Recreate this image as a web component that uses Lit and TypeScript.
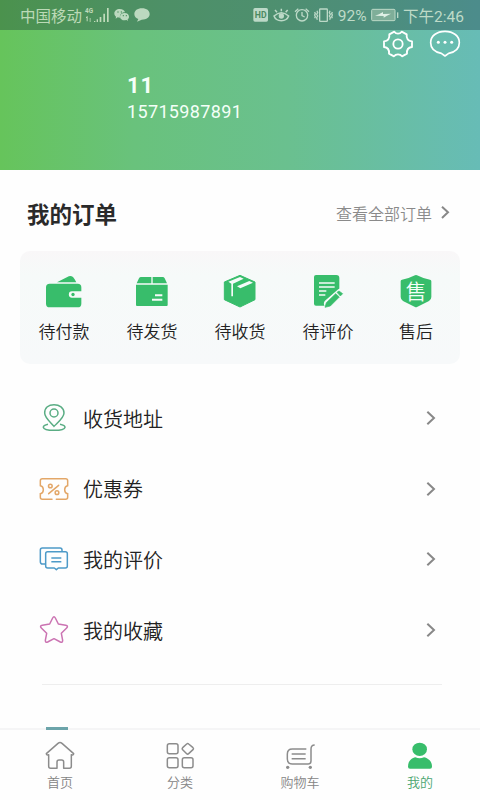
import { LitElement, html, css, svg, nothing } from "lit";
import { customElement, property } from "lit/decorators.js";

// Every icon is drawn on a grid of three units per CSS pixel.
const icons: Record<string, { w: number; h: number; body: unknown }> = {
  wallet: { w: 40, h: 40, body: svg`<g fill="#38bd6b"><path d="M39 34 70 18Q79 12 87 18Q91 22 97 34Z"/><path fill-rule="evenodd" d="M17 38H101Q112 38 112 49V61H84A9.500 9.500 0 0 0 84 80H112V98Q112 109 101 109H17Q6 109 6 98V49Q6 38 17 38Z"/><circle cx="87" cy="70.500" r="5"/></g>` },
  box: { w: 40, h: 40, body: svg`<path fill="#38bd6b" d="M14 37 21 22Q23 18 27 18H58V37ZM62 18H92Q96 18 98 22L105 37H62ZM12 41H107V102Q107 105 104 105H15Q12 105 12 102Z"/><path stroke="#f6faf9" stroke-width="6" d="M69 73H91M60 86H91"/>` },
  cube: { w: 40, h: 40, body: svg`<path fill="#38bd6b" stroke="#38bd6b" stroke-width="3" stroke-linejoin="round" d="M60 13 105 33V86L60 108 13 86V33Z"/><path fill="#f6faf9" d="M25 32 60 18 71 23 39 38V76H34V38ZM51 46 88 30 99 35 61 52Z"/>` },
  review: { w: 40, h: 40, body: svg`<path fill="#38bd6b" d="M24 12H85Q94 12 94 21V60L53 104H24Q18 104 18 98V18Q18 12 24 12Z"/><path stroke="#f6faf9" stroke-width="4.500" d="M33 36H80M33 48H80M33 60H55M33 72H52"/><path stroke="#f6faf9" stroke-width="25" stroke-linecap="round" d="M60 98 98 65"/><path fill="#38bd6b" stroke="#38bd6b" stroke-width="2" stroke-linejoin="round" d="M51 109 55 95 83 68 94 78 67 105ZM87 64 93 60 104 68 97 75Z"/>` },
  service: { w: 40, h: 40, body: svg`<path fill="#38bd6b" d="M57 13Q60 11 63 13Q82 23 102 26Q106 27 106 31V78Q106 86 99 90L63 108Q60 110 57 108L21 90Q14 86 14 78V31Q14 27 18 26Q38 23 57 13Z"/><text x="60" y="84" text-anchor="middle" font-size="63" font-weight="350" fill="#f4fff8" font-family="Noto Sans CJK SC, sans-serif">售</text>` },
  pin: { w: 30, h: 30, body: svg`<g fill="none" stroke="#5aad84" stroke-width="4.500"><path d="M45 70C33 56 17 44 17 30C17 14 29 5 45 5S75 14 75 30C75 44 58 57 45 70Z"/><circle cx="45" cy="30" r="12"/><path d="M27 64C17 66 13 69 13 73C15 85 76 85 78 73C78 69 73 66 63 64"/></g>` },
  coupon: { w: 30, h: 30, body: svg`<g fill="none" stroke="#e3a768" stroke-width="4.500" stroke-linecap="round"><path d="M39 76H10Q4 76 4 70V59C16 57 16 37 4 35V20Q4 14 10 14H80Q86 14 86 20V35C74 37 74 57 86 59V70Q86 76 80 76H52M29 59 59 34"/><circle cx="34" cy="36" r="5.500"/><circle cx="54" cy="56" r="5.500"/></g>` },
  chat: { w: 30, h: 30, body: svg`<g fill="none" stroke="#4d9ac8" stroke-width="4.500" stroke-linejoin="round"><path d="M20 60H11Q4 60 4 53V18Q4 12 10 12H63Q69 12 69 18V23"/><path d="M26 23H79Q85 23 85 29V66Q85 72 79 72H58L52 77 46 72H26Q20 72 20 66V29Q20 23 26 23Z"/><path d="M37 42H67M37 53H67"/></g>` },
  star: { w: 30, h: 30, body: svg`<path fill="none" stroke="#cb73b2" stroke-width="4.500" stroke-linejoin="round" d="M41 9Q45 2 49 9L58 27 80 31Q89 33 83 39L67 55 71 76Q71 84 64 81L45 71 26 81Q19 84 19 76L23 55 7 39Q1 33 10 31L32 27Z"/>` },
  home: { w: 32, h: 30, body: svg`<path fill="none" stroke="#8c8c8c" stroke-width="4.500" stroke-linejoin="round" d="M7 38 42 7Q48 2 54 7L89 38Q88 44 82 41V76Q82 82 76 82H59V63Q59 57 53 57H45Q39 57 39 63V82H20Q14 82 14 76V41Q8 44 7 38Z"/>` },
  category: { w: 32, h: 30, body: svg`<g fill="none" stroke="#8c8c8c" stroke-width="4.500"><rect x="10" y="8" width="32" height="30" rx="6"/><rect x="10" y="50" width="32" height="30" rx="6"/><rect x="55" y="50" width="32" height="30" rx="6"/><path stroke-linejoin="round" d="M68 9Q71 6 74 9L87 20Q90 23 87 26L74 38Q71 41 68 38L56 26Q53 23 56 20Z"/></g>` },
  cart: { w: 32, h: 30, body: svg`<g fill="none" stroke="#8c8c8c" stroke-width="4.500"><path d="M67 24H25Q10 24 10 39V54Q10 69 25 69H72Q81 69 81 60V24Q81 12 92 12M23 39H65M23 53H65"/></g><g fill="#8c8c8c"><circle cx="11" cy="79" r="5"/><circle cx="79" cy="79" r="5"/></g>` },
  user: { w: 32, h: 30, body: svg`<g fill="#38bd6b"><ellipse cx="47" cy="25" rx="22" ry="20"/><path d="M12 77C12 59 24 51 34 49Q47 55 60 49C72 52 84 60 84 77Q84 83 78 83H18Q12 83 12 77Z"/></g>` },
  gear: { w: 32, h: 30, body: svg`<g fill="none" stroke="#fff" stroke-width="5.500" stroke-linejoin="round"><path d="M37 8Q41 14 48 14T59 8L74 16Q72 35 90 37V54Q73 56 75 74L60 82Q56 76 48 76T36 82L21 74Q23 56 6 54V37Q24 35 22 16Z"/><circle cx="48" cy="45" r="14"/></g>` },
  bubble: { w: 32, h: 30, body: svg`<path fill="none" stroke="#fff" stroke-width="5" stroke-linejoin="round" d="M48 81 37 73C18 69 5 58 5 41C5 21 23 7 48 7S91 21 91 41C91 58 78 69 59 73Z"/><g fill="#fff"><circle cx="28" cy="40" r="4.500"/><circle cx="48" cy="40" r="4.500"/><circle cx="68" cy="40" r="4.500"/></g>` },
  chevron: { w: 12, h: 18, body: svg`<path fill="none" stroke="#888" stroke-width="6" d="M7 8 27 27 7 46"/>` },
  chevronSmall: { w: 10, h: 14, body: svg`<path fill="none" stroke="#888" stroke-width="6" d="M6 2 24 19 6 36"/>` },
  signal: { w: 25, h: 16, body: svg`<g fill="#c0dbbb"><path d="M27 42H31V45H27ZM35 37H39V45H35ZM44 30H49V45H44ZM55 20H60V45H55ZM66 3H71V45H66Z"/><path d="M3 30 8 27V43H5V33H3ZM14 34H17V38H14ZM14 40H17V44H14Z"/></g><text x="0" y="19" font-size="22" font-weight="700" textLength="24" lengthAdjust="spacingAndGlyphs" fill="#c0dbbb" font-family="Roboto, sans-serif">4G</text>` },
  wechat: { w: 16, h: 14, body: svg`<g fill="#bcd9bf"><path d="M17 3C8 3 1 9 1 16C1 21 3 24 6 26L5 32 11 28 18 29C16 20 24 12 33 13C32 7 26 3 17 3Z"/><path d="M32 15C24 15 18 20 18 26S24 37 32 37L38 36 42 39 41 34C44 32 45 29 45 26C45 20 40 15 32 15Z"/></g><g fill="#4a8e5b"><circle cx="12" cy="12" r="2"/><circle cx="22" cy="12" r="2"/><circle cx="28" cy="23" r="2"/><circle cx="37" cy="23" r="2"/></g>` },
  message: { w: 16, h: 14, body: svg`<path fill="#bcd9bf" d="M24 1C10 1 1 8 1 18C1 26 6 31 13 33L9 41 23 35C38 35 47 28 47 18S38 1 24 1Z"/>` },
  hd: { w: 16, h: 16, body: svg`<rect x="1" y="3" width="44" height="41" rx="5" fill="#bcd9c7"/><text x="23" y="33" text-anchor="middle" font-size="26" font-weight="700" fill="#4c8a61" font-family="Roboto, sans-serif">HD</text>` },
  eye: { w: 17, h: 16, body: svg`<g fill="none" stroke="#bcd9c7" stroke-width="4.500"><path d="M3 27Q25 7 47 27Q42 41 25 41T3 27ZM25 13V5M12 16 6 9M38 16 44 9"/></g><circle cx="25" cy="27" r="8" fill="#bcd9c7"/>` },
  alarm: { w: 16, h: 16, body: svg`<g fill="none" stroke="#bcd9c7" stroke-width="4"><circle cx="24" cy="25" r="17"/><path d="M24 15V26L32 30M3 14 13 5M45 14 35 5"/></g>` },
  vibrate: { w: 19, h: 16, body: svg`<g fill="none" stroke="#bcd9c7" stroke-width="4"><rect x="17" y="6" width="23" height="37" rx="2"/><path d="M9 11 11 17 8 22 11 27 8 32 10 38M48 11 46 17 49 22 46 27 49 32 47 38M2 15 4 20 2 24 4 29 2 34M55 15 53 20 55 24 53 29 55 34"/></g>` },
  battery: { w: 28, h: 16, body: svg`<rect x="2" y="7" width="70" height="34" rx="3" fill="#7fae99" stroke="#bcd9c7" stroke-width="3"/><rect x="78" y="16" width="4" height="17" fill="#bcd9c7"/><path d="M12 26 24 22 36 15 36 21 60 20 48 26 38 32V27Z" fill="#e0f0e6"/>` },
};

@customElement("ui-icon")
class UiIcon extends LitElement {
  @property() name = "";
  static styles = css`:host { display: block; flex: none; } svg { display: block; overflow: visible; }`;
  render() {
    const i = icons[this.name];
    return i ? html`<svg width=${i.w} height=${i.h} viewBox="0 0 ${i.w * 3} ${i.h * 3}">${i.body}</svg>` : nothing;
  }
}

const orders = [["wallet", "待付款"], ["box", "待发货"], ["cube", "待收货"], ["review", "待评价"], ["service", "售后"]];
const rows = [["pin", "收货地址"], ["coupon", "优惠券"], ["chat", "我的评价"], ["star", "我的收藏"]];
const tabs = [["home", "首页"], ["category", "分类"], ["cart", "购物车"], ["user", "我的"]];

@customElement("app-root")
class AppRoot extends LitElement {
  static styles = css`
    :host { display: flex; flex-direction: column; width: 480px; height: 800px; overflow: hidden; background: #fefefe; color: #2a2a2a; font-family: Roboto, "Noto Sans CJK SC", sans-serif; white-space: nowrap; }
    * { box-sizing: border-box; }
    .header { flex: none; height: 170px; background: linear-gradient(90deg, #66c45b 0, #69c27c 28%, #6ac08f 60%, #67bcb6 100%); color: #f4fff8; }
    .status { display: flex; align-items: center; height: 30px; padding: 0 16px 0 20px; background: rgba(20, 40, 50, .32); color: #bfdbc8; font-size: 15.500px; line-height: 26px; }
    .status span { padding-top: 3px; }
    .status .level { padding-top: 2px; }
    .carrier { width: 65px; color: #bcdab7; }
    .sys { display: flex; align-items: center; gap: 4.300px; margin-left: auto; }
    .left { display: flex; align-items: center; gap: 4px; }
    .tools { display: flex; justify-content: flex-end; gap: 15px; padding-right: 19px; margin-top: -1px; }
    .profile { padding: 13px 0 0 127px; }
    .name { font-size: 22px; line-height: 28px; font-weight: 700; letter-spacing: 1px; }
    .phone { font-size: 18px; line-height: 24px; letter-spacing: .35px; }
    .heading { flex: none; display: flex; align-items: center; height: 81px; padding: 4px 30px 0 27px; }
    .title { font-size: 22.500px; font-weight: 700; }
    .all { display: flex; align-items: center; gap: 8px; margin-left: auto; color: #8a8a8a; font-size: 16px; font-weight: 350; }
    .card { flex: none; display: flex; height: 113px; margin: 0 20px; padding-top: 20px; border-radius: 10px; background: linear-gradient(#f9f7f8, #f6faf9 22%, #f7f9fa); }
    .order { flex: 1; display: flex; flex-direction: column; align-items: center; font-size: 17px; line-height: 43px; font-weight: 350; color: #222; }
    .rows { flex: none; padding: 19px 43px 0 39px; height: 320px; }
    .row { display: flex; align-items: center; height: 70.600px; font-size: 20px; font-weight: 350; color: #222; }
    .row .text { flex: 1; margin-left: 14px; }
    .divider { flex: none; height: 1px; margin: 0 38px 0 42px; background: #eee; }
    .peek { flex: 1; display: flex; align-items: flex-end; padding-left: 46px; }
    .next { position: relative; width: 22px; height: 3px; margin-bottom: -2px; background: #6ca4aa; }
    .tabs { flex: none; display: flex; height: 72px; border-top: 2px solid #f5f5f6; padding-top: 11px; color: #858585; font-size: 13px; line-height: 23px; font-weight: 350; }
    .tab { flex: 1; display: flex; flex-direction: column; align-items: center; }
    .active { color: #4aa570; }
  `;
  render() {
    return html`
      <div class="header">
        <div class="status">
          <span class="carrier">中国移动</span>
          <div class="left"><ui-icon name="signal"></ui-icon><ui-icon name="wechat"></ui-icon><ui-icon name="message"></ui-icon></div>
          <div class="sys">
            <ui-icon name="hd"></ui-icon><ui-icon name="eye"></ui-icon><ui-icon name="alarm"></ui-icon><ui-icon name="vibrate"></ui-icon>
            <span class="level">92%</span><ui-icon name="battery"></ui-icon><span>下午2:46</span>
          </div>
        </div>
        <div class="tools"><ui-icon name="gear"></ui-icon><ui-icon name="bubble"></ui-icon></div>
        <div class="profile"><div class="name">11</div><div class="phone">15715987891</div></div>
      </div>
      <div class="heading"><span class="title">我的订单</span><span class="all">查看全部订单<ui-icon name="chevronSmall"></ui-icon></span></div>
      <div class="card">${orders.map(([i, t]) => html`<div class="order"><ui-icon name=${i}></ui-icon><span>${t}</span></div>`)}</div>
      <div class="rows">${rows.map(([i, t]) => html`<div class="row"><ui-icon name=${i}></ui-icon><span class="text">${t}</span><ui-icon name="chevron"></ui-icon></div>`)}</div>
      <div class="divider"></div>
      <div class="peek"><div class="next"></div></div>
      <div class="tabs">${tabs.map(([i, t]) => html`<div class="tab ${i === "user" ? "active" : ""}"><ui-icon name=${i}></ui-icon><span>${t}</span></div>`)}</div>
    `;
  }
}
